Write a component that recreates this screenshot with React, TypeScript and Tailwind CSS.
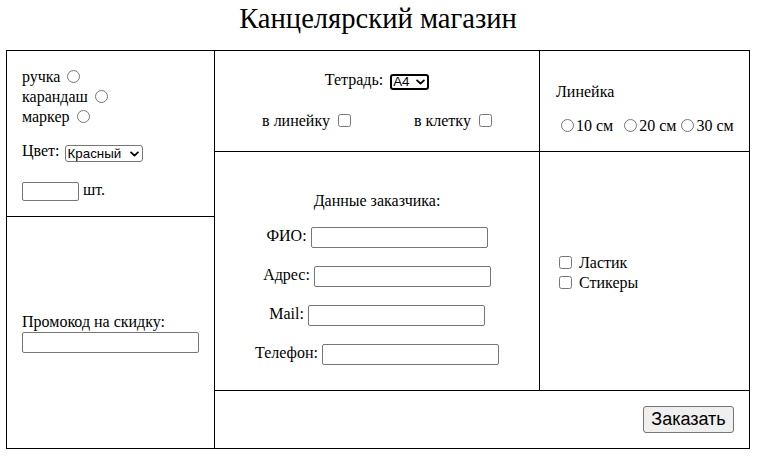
import { ChangeEvent, useState } from "react";

function Chevron() {
  return (
    <svg width="9" height="6" viewBox="0 0 10 6" className="pointer-events-none absolute right-[4px] top-1/2 -translate-y-1/2">
      <path d="M1.2 1.2L5 4.8l3.8-3.6" stroke="#000" strokeWidth="2" fill="none" strokeLinecap="round" strokeLinejoin="round" />
    </svg>
  );
}

export default function App() {
  const [color, setColor] = useState("red");
  const [size, setSize] = useState("A4");

  return (
    <div className="w-[765px] h-[468px] bg-white text-black font-['Liberation_Serif','Times_New_Roman',serif] text-[16px]">
      <div className="ml-[6px] w-[744px] h-[50px] pt-[3px] text-center text-[28.6px] leading-[32px]">
        Канцелярский магазин
      </div>

      <div className="ml-[6px] w-[744px] grid grid-cols-[207px_324px_209px] grid-rows-[100px_64px_173px_57px] gap-px p-px bg-black leading-5">
        {/* товар */}
        <div className="col-start-1 row-start-1 row-span-2 bg-white pt-[16px] pl-[15px]">
          {["ручка", "карандаш", "маркер"].map(t => (
            <label key={t} className="flex h-5 items-start">
              <span>{t}</span>
              <input type="radio" name="item" className="ml-[7px] mt-[3px] size-[13px]" />
            </label>
          ))}
          <div className="mt-[14px] flex items-start">
            <span>Цвет:</span>
            <div className="relative ml-[5px] mt-[4px]">
              <select
                value={color}
                onChange={(e: ChangeEvent<HTMLSelectElement>) => setColor(e.target.value)}
                className="block w-[78px] h-[17px] appearance-none rounded-[3px] border border-[#767676] bg-white pl-[2px] font-['Liberation_Sans',Arial,sans-serif] text-[13.33px] leading-[15px]"
              >
                <option value="red">Красный</option>
                <option value="blue">Синий</option>
                <option value="black">Черный</option>
              </select>
              <Chevron />
            </div>
          </div>
          <div className="mt-[18px] flex items-start">
            <input type="text" className="mt-[2px] h-[19px] w-[57px] rounded-[2px] border border-[#767676] bg-white" />
            <span className="ml-[4px]">шт.</span>
          </div>
        </div>

        {/* тетрадь */}
        <div className="col-start-2 row-start-1 bg-white pt-[19px]">
          <div className="flex items-start justify-center">
            <span>Тетрадь:</span>
            <div className="relative ml-[7px] mt-[4px]">
              <select
                value={size}
                onChange={(e: ChangeEvent<HTMLSelectElement>) => setSize(e.target.value)}
                className="block w-[39px] h-[16px] appearance-none rounded-[3px] border-2 border-black bg-white pl-[1px] font-['Liberation_Sans',Arial,sans-serif] text-[13.33px] leading-[12px]"
              >
                <option value="A4">A4</option>
                <option value="A5">A5</option>
              </select>
              <Chevron />
            </div>
          </div>
          <div className="mt-[21px] flex items-start justify-center gap-[63px]">
            <label className="flex items-start">
              <span>в линейку</span>
              <input type="checkbox" className="ml-[8px] mt-[3px] size-[13px]" />
            </label>
            <label className="flex items-start">
              <span>в клетку</span>
              <input type="checkbox" className="ml-[8px] mt-[3px] size-[13px]" />
            </label>
          </div>
        </div>

        {/* линейка */}
        <div className="col-start-3 row-start-1 bg-white pt-[31px] pl-[16px]">
          <div>Линейка</div>
          <div className="mt-[14px] flex items-start">
            <input type="radio" name="ruler" className="ml-[5px] mt-[3px] mr-[2px] size-[13px]" />
            <span>10 см</span>
            <input type="radio" name="ruler" className="ml-[11px] mt-[3px] mr-[2px] size-[13px]" />
            <span>20 см</span>
            <input type="radio" name="ruler" className="ml-[5px] mt-[3px] mr-[2px] size-[13px]" />
            <span>30 см</span>
          </div>
        </div>

        {/* данные заказчика */}
        <div className="col-start-2 row-start-2 row-span-2 bg-white pt-[39px] flex flex-col items-center">
          <div>Данные заказчика:</div>
          {["ФИО:", "Адрес:", "Mail:", "Телефон:"].map((l, i) => (
            <div key={l} className={`flex items-start gap-[4px] ${i === 0 ? "mt-[15px]" : "mt-[17px]"}`}>
              <span>{l}</span>
              <input type="text" className="mt-px h-[21px] w-[177px] rounded-[2px] border border-[#767676] bg-white" />
            </div>
          ))}
        </div>

        {/* доп. товары */}
        <div className="col-start-3 row-start-2 row-span-2 bg-white pl-[19px] pt-[3px] flex flex-col justify-center">
          {["Ластик", "Стикеры"].map(t => (
            <label key={t} className="flex h-5 items-start">
              <input type="checkbox" className="mt-[3px] size-[13px]" />
              <span className="ml-[7px]">{t}</span>
            </label>
          ))}
        </div>

        {/* промокод */}
        <div className="col-start-1 row-start-3 row-span-2 bg-white pl-[15px] flex flex-col justify-center">
          <div>Промокод на скидку:</div>
          <input type="text" className="h-[21px] w-[177px] rounded-[2px] border border-[#767676] bg-white" />
        </div>

        {/* кнопка */}
        <div className="col-start-2 col-span-2 row-start-4 bg-white pr-[15px] flex items-center justify-end">
          <button className="h-[27px] w-[91px] rounded-[3px] border border-[#767676] bg-[#efefef] font-['Liberation_Sans',Arial,sans-serif] text-[18px] leading-[25px]">
            Заказать
          </button>
        </div>
      </div>
    </div>
  );
}
